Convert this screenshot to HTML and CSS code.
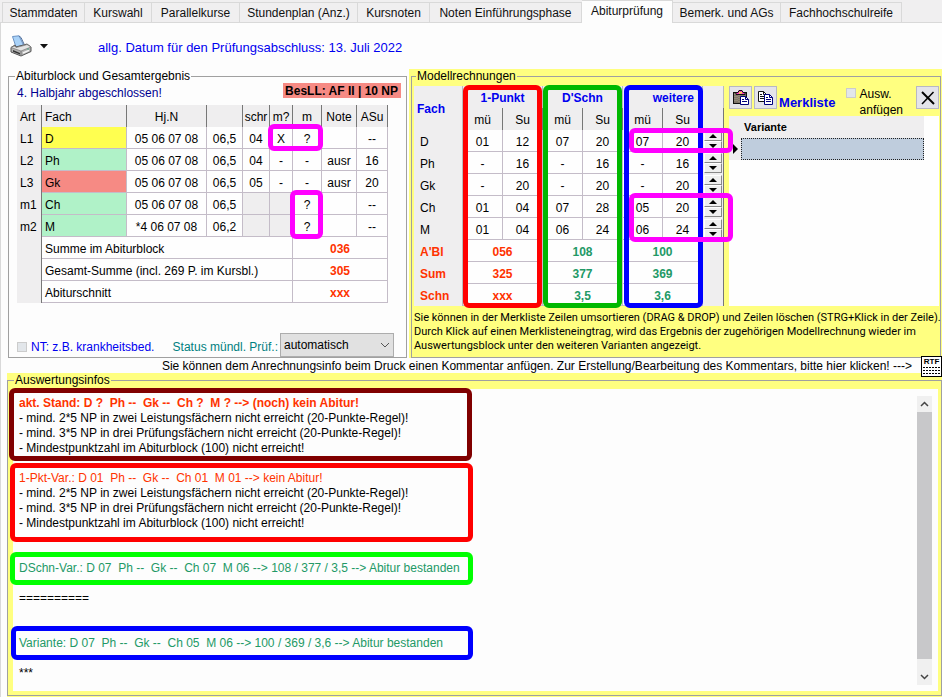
FILE: index.html
```html
<!DOCTYPE html>
<html lang="de">
<head>
<meta charset="utf-8">
<title>Abiturprüfung</title>
<link rel="stylesheet" href="styles.css">
</head>
<body>
<nav class="tabs">
  <a href="#">Stammdaten</a>
  <a href="#">Kurswahl</a>
  <a href="#">Parallelkurse</a>
  <a href="#">Stundenplan (Anz.)</a>
  <a href="#">Kursnoten</a>
  <a href="#">Noten Einführungsphase</a>
  <a href="#" class="active" aria-current="page">Abiturprüfung</a>
  <a href="#">Bemerk. und AGs</a>
  <a href="#">Fachhochschulreife</a>
</nav>
<main class="page">
  <div class="toolbar">
    <button class="print" aria-label="Drucken">
      <svg width="22" height="22" viewBox="0 0 22 22">
        <path d="M2.500 1.500 L9 .8 L13.500 10 L6 12 Z" fill="#a9d2f8" stroke="#6c93c4"/>
        <path d="M9 1 L11 2.500 L14 9" fill="none" stroke="#4f6f9c"/>
        <path d="M1 12.500 L5 10 L6 12 L13.500 10 L17 9 L21 12 L21 16.500 L11 21 L1 17 Z" fill="#b4b4b4" stroke="#555"/>
        <path d="M1 12.500 L11 16 L21 12 L17 9.500 L14 10.500 L6 12.500 L4.500 11 Z" fill="#e4e4e4" stroke="#777" stroke-width=".7"/>
        <path d="M3 15 L10 18 L10 19.500 L3 16.700 Z" fill="#333"/>
        <path d="M11 16 V21" stroke="#777"/>
        <path d="M13 18 L19 15.400" stroke="#f4f4f4" stroke-width="1.500"/>
        <rect x="17" y="13.500" width="2" height="1" fill="#5a8"/>
      </svg>
      <svg width="8" height="5" viewBox="0 0 8 5"><path d="M0 0 H8 L4 4.500 Z" fill="#111"/></svg>
    </button>
    <span class="date">allg. Datum für den Prüfungsabschluss: 13. Juli 2022</span>
  </div>

  <div class="panels">
    <fieldset class="group abitur">
      <legend>Abiturblock und Gesamtergebnis</legend>
      <div class="abi-head">
        <span class="navy">4. Halbjahr abgeschlossen!</span>
        <strong class="badge">BesLL: AF II | 10 NP</strong>
      </div>
      <div class="marked">
        <table class="grid abi-grid">
          <colgroup><col class="w24"><col class="w85"><col class="w80"><col class="w36"><col class="w27"><col class="w23"><col class="w29"><col class="w35"><col class="w32"></colgroup>
          <thead><tr><th class="l">Art</th><th class="l">Fach</th><th>Hj.N</th><th></th><th>schr</th><th>m?</th><th>m</th><th>Note</th><th>ASu</th></tr></thead>
          <tbody>
            <tr><th class="l">L1</th><td class="l yellow">D</td><td>05 06 07 08</td><td>06,5</td><td>04</td><td>X</td><td>?</td><td></td><td>--</td></tr>
            <tr><th class="l">L2</th><td class="l mint">Ph</td><td>05 06 07 08</td><td>06,5</td><td>04</td><td>-</td><td>-</td><td>ausr</td><td>16</td></tr>
            <tr><th class="l">L3</th><td class="l salmon">Gk</td><td>05 06 07 08</td><td>06,5</td><td>05</td><td>-</td><td>-</td><td>ausr</td><td>20</td></tr>
            <tr><th class="l">m1</th><td class="l mint">Ch</td><td>05 06 07 08</td><td>06,5</td><td class="off"></td><td class="off"></td><td>?</td><td></td><td>--</td></tr>
            <tr><th class="l">m2</th><td class="l mint">M</td><td>*4 06 07 08</td><td>06,2</td><td class="off"></td><td class="off"></td><td>?</td><td></td><td>--</td></tr>
            <tr><th></th><td class="l" colspan="5">Summe im Abiturblock</td><td class="bad" colspan="3">036</td></tr>
            <tr><th></th><td class="l" colspan="5">Gesamt-Summe (incl. 269 P. im Kursbl.)</td><td class="bad" colspan="3">305</td></tr>
            <tr><th></th><td class="l" colspan="5">Abiturschnitt</td><td class="bad" colspan="3">xxx</td></tr>
          </tbody>
        </table>
        <i class="mark magenta mark-lk"></i>
        <i class="mark magenta mark-m"></i>
      </div>
      <div class="abi-foot">
        <input type="checkbox" id="nt"><label for="nt" class="blue">NT: z.B. krankheitsbed.</label>
        <label for="status" class="teal">Status mündl. Prüf.:</label>
        <span class="select">
          <select id="status"><option>automatisch</option></select>
          <svg width="10" height="6" viewBox="0 0 10 6"><path d="M1 1 L5 5 L9 1" fill="none" stroke="#555"/></svg>
        </span>
      </div>
    </fieldset>

    <div class="tint model-wrap">
      <fieldset class="group model">
        <legend>Modellrechnungen</legend>
        <div class="model-body">
          <div class="marked">
            <table class="grid model-grid">
              <colgroup><col class="w49"><col class="w40"><col class="w40"><col class="w40"><col class="w40"><col class="w40"><col class="w40"><col class="w21"></colgroup>
              <thead>
                <tr><th class="l blue b" rowspan="2">Fach</th><th class="blue b" colspan="2">1-Punkt</th><th class="blue b" colspan="2">D'Schn</th><th class="blue b r" colspan="2">weitere</th><th></th></tr>
                <tr><th>mü</th><th>Su</th><th>mü</th><th>Su</th><th>mü</th><th>Su</th><th></th></tr>
              </thead>
              <tbody>
                <tr><th class="l">D</th><td>01</td><td>12</td><td>07</td><td>20</td><td>07</td><td>20</td><th class="spin"><button aria-label="D erhöhen"></button><button class="down" aria-label="D verringern"></button></th></tr>
                <tr><th class="l">Ph</th><td>-</td><td>16</td><td>-</td><td>16</td><td>-</td><td>16</td><th class="spin"><button aria-label="Ph erhöhen"></button><button class="down" aria-label="Ph verringern"></button></th></tr>
                <tr><th class="l">Gk</th><td>-</td><td>20</td><td>-</td><td>20</td><td>-</td><td>20</td><th class="spin"><button aria-label="Gk erhöhen"></button><button class="down" aria-label="Gk verringern"></button></th></tr>
                <tr><th class="l">Ch</th><td>01</td><td>04</td><td>07</td><td>28</td><td>05</td><td>20</td><th class="spin"><button aria-label="Ch erhöhen"></button><button class="down" aria-label="Ch verringern"></button></th></tr>
                <tr><th class="l">M</th><td>01</td><td>04</td><td>06</td><td>24</td><td>06</td><td>24</td><th class="spin"><button aria-label="M erhöhen"></button><button class="down" aria-label="M verringern"></button></th></tr>
                <tr><th class="l bad">A'Bl</th><td class="bad" colspan="2">056</td><td class="good" colspan="2">108</td><td class="good" colspan="2">100</td><th></th></tr>
                <tr><th class="l bad">Sum</th><td class="bad" colspan="2">325</td><td class="good" colspan="2">377</td><td class="good" colspan="2">369</td><th></th></tr>
                <tr><th class="l bad">Schn</th><td class="bad" colspan="2">xxx</td><td class="good" colspan="2">3,5</td><td class="good" colspan="2">3,6</td><th></th></tr>
              </tbody>
            </table>
            <i class="mark red mark-col1"></i>
            <i class="mark green mark-col2"></i>
            <i class="mark royal mark-col3"></i>
            <i class="mark magenta mark-d"></i>
            <i class="mark magenta mark-ch"></i>
          </div>
          <section class="merk">
            <div class="merk-bar">
              <button class="tool" aria-label="Einfügen">
                <svg width="18" height="18" viewBox="0 0 18 18">
                  <rect x="1.500" y="3.500" width="13" height="11" fill="#7d7568" stroke="#111"/>
                  <path d="M3 5 V13 M5 5 V13 M7 6 V13" stroke="#a9a08c" stroke-dasharray="1 1"/>
                  <path d="M4 5.500 V3.500 H6 L7 1.500 H10 L11 3.500 H13 V5.500 Z" fill="#ff40c0" stroke="#111"/>
                  <rect x="7" y="3" width="3" height="1.500" fill="#ffec3d"/>
                  <path d="M8.500 7.500 H13.500 L16.500 10.500 V15.500 H8.500 Z" fill="#fff" stroke="#00007c"/>
                  <path d="M13.500 7.500 V10.500 H16.500 M10 10.500 H12 M10 12.500 H15" fill="none" stroke="#00007c"/>
                </svg>
              </button>
              <button class="tool" aria-label="Kopieren">
                <svg width="18" height="18" viewBox="0 0 18 18">
                  <path d="M1.500 2.500 H6.500 L9.500 5.500 V12.500 H1.500 Z" fill="#fff" stroke="#111"/>
                  <path d="M6.500 2.500 V5.500 H9.500 M3 5.500 H5 M3 7.500 H7 M3 9.500 H7" fill="none" stroke="#111"/>
                  <path d="M7.500 5.500 H12.500 L15.500 8.500 V15.500 H7.500 Z" fill="#fff" stroke="#00007c"/>
                  <path d="M12.500 5.500 V8.500 H15.500 M9 8.500 H11 M9 10.500 H14 M9 12.500 H14" fill="none" stroke="#00007c"/>
                </svg>
              </button>
              <strong class="blue merk-title">Merkliste</strong>
              <span class="attach"><input type="checkbox" id="ausw"><label for="ausw">Ausw.<br>anfügen</label></span>
              <button class="tool" aria-label="Löschen">
                <svg width="16" height="16" viewBox="0 0 16 16"><path d="M2 2 L14 14" stroke="#000" stroke-width="2"/><path d="M13.500 2 L2 14" stroke="#000" stroke-width="1.500"/></svg>
              </button>
            </div>
            <div class="merk-list">
              <table>
                <thead><tr><th class="mark-cell"></th><th>Variante</th></tr></thead>
                <tbody><tr><th class="mark-cell"><svg width="6" height="12" viewBox="0 0 6 12"><path d="M0 1 L5 6 L0 11 Z" fill="#000"/></svg></th><td></td></tr></tbody>
              </table>
            </div>
          </section>
        </div>
        <p class="hint">Sie können in der Merkliste Zeilen umsortieren (DRAG &amp; DROP) und Zeilen löschen (STRG+Klick in der Zeile).<br>Durch Klick auf einen Merklisteneingtrag, wird das Ergebnis der zugehörigen Modellrechnung wieder im<br>Auswertungsblock unter den weiteren Varianten angezeigt.</p>
      </fieldset>
    </div>
  </div>

  <div class="comment">
    <span>Sie können dem Anrechnungsinfo beim Druck einen Kommentar anfügen. Zur Erstellung/Bearbeitung des Kommentars, bitte hier klicken! ---&gt;</span>
    <button class="rte" aria-label="Kommentar bearbeiten">
      <b>RTF</b>
      <svg width="17" height="7" viewBox="0 0 17 7"><path d="M0 .5 H17 M0 3.500 H17 M0 6.500 H17" stroke="#000" stroke-dasharray="2 1"/></svg>
    </button>
  </div>

  <div class="tint result-wrap">
    <fieldset class="group result">
      <legend>Auswertungsinfos</legend>
      <div class="memo">
        <div class="lines"><b class="alert">akt. Stand: D ?  Ph --  Gk --  Ch ?  M ? --&gt; (noch) kein Abitur!</b>
- mind. 2*5 NP in zwei Leistungsfächern nicht erreicht (20-Punkte-Regel)!
- mind. 3*5 NP in drei Prüfungsfächern nicht erreicht (20-Punkte-Regel)!
- Mindestpunktzahl im Abiturblock (100) nicht erreicht!

<span class="alert">1-Pkt-Var.: D 01  Ph --  Gk --  Ch 01  M 01 --&gt; kein Abitur!</span>
- mind. 2*5 NP in zwei Leistungsfächern nicht erreicht (20-Punkte-Regel)!
- mind. 3*5 NP in drei Prüfungsfächern nicht erreicht (20-Punkte-Regel)!
- Mindestpunktzahl im Abiturblock (100) nicht erreicht!


<span class="pass">DSchn-Var.: D 07  Ph --  Gk --  Ch 07  M 06 --&gt; 108 / 377 / 3,5 --&gt; Abitur bestanden</span>

==========


<span class="pass">Variante: D 07  Ph --  Gk --  Ch 05  M 06 --&gt; 100 / 369 / 3,6 --&gt; Abitur bestanden</span>

***</div>
        <div class="scroll">
          <button aria-label="Nach oben"><svg width="9" height="6" viewBox="0 0 9 6"><path d="M1 5 L4.500 1.500 L8 5" fill="none" stroke="#444" stroke-width="1.500"/></svg></button>
          <span class="thumb"></span>
          <button aria-label="Nach unten"><svg width="9" height="6" viewBox="0 0 9 6"><path d="M1 1 L4.500 4.500 L8 1" fill="none" stroke="#444" stroke-width="1.500"/></svg></button>
        </div>
        <i class="mark maroon mark-akt"></i>
        <i class="mark red mark-pkt"></i>
        <i class="mark lime mark-dschn"></i>
        <i class="mark royal mark-var"></i>
      </div>
    </fieldset>
  </div>
</main>
</body>
</html>
```
FILE: styles.css
```css
* { box-sizing: border-box; }

body {
  margin: 0;
  min-height: 100vh;
  display: flex;
  flex-direction: column;
  background: #fdfdfd;
  color: #000;
  font: 12px/14px "Liberation Sans", Arial, sans-serif;
}

button, select, input { font: inherit; margin: 0; padding: 0; }
svg { display: block; }

.blue { color: #0000f0; }
.navy { color: #000090; }
.teal { color: #008080; }
.b { font-weight: bold; }

/* Tabs */
.tabs {
  display: grid;
  grid-template-columns: 83px 67px 88px 118px 72px 152px 91px 108px 121px;
  height: 23px;
  padding-left: 2px;
  background: #f0eff0;
  border-bottom: 1px solid #d9d9d9;
  white-space: nowrap;
}
.tabs a {
  margin-top: 2px;
  height: 20px;
  line-height: 21px;
  text-align: center;
  color: #111;
  text-decoration: none;
  border: solid #d9d9d9;
  border-width: 1px 1px 0 0;
}
.tabs a:first-child { border-left-width: 1px; }
.tabs .active {
  margin-top: 0;
  height: 23px;
  background: #fdfdfd;
}

/* Page */
.page {
  flex: 1;
  display: flex;
  flex-direction: column;
  border-left: 1px solid #d9d9d9;
}
.toolbar {
  display: flex;
  align-items: center;
  height: 46px;
  padding: 0 9px;
}
.print {
  display: flex;
  align-items: center;
  gap: 8px;
  width: 88px;
  border: 0;
  background: none;
}
.date { color: #0000f0; font-size: 13px; padding-top: 4px; }

.group {
  min-width: 0;
  margin: 0;
  padding: 0;
  border: 1px solid #a0a0a0;
}
.group legend {
  margin-left: 6px;
  padding: 0 1px;
  height: 14px;
  white-space: nowrap;
}
.group.model legend { margin-left: 4px; }
.group.result legend { margin-left: 1px; }
.tint { background: #ffff80; }

.panels { display: flex; gap: 2px; padding-left: 7px; }
.abitur { flex: 0 0 399px; }
.model-wrap { flex: 1; min-width: 0; padding: 0 1px 0 2px; }
.model { height: 100%; }

.abi-head, .abi-foot, .abitur .marked { margin: 0 8px; }
.abi-head { display: flex; justify-content: space-between; height: 22px; }
.abi-head .navy { padding-top: 3px; }
.badge {
  height: 15px;
  margin-right: -3px;
  padding: 0 3px 0 2px;
  line-height: 16px;
  background: #f68a84;
}

/* Data grids */
.marked { position: relative; }
.grid {
  table-layout: fixed;
  border-collapse: separate;
  border-spacing: 0;
}
.abi-grid { width: 371px; }
.model-grid { width: 310px; }
.w21 { width: 21px; }
.w23 { width: 23px; }
.w24 { width: 25px; }
.w27 { width: 27px; }
.w29 { width: 29px; }
.w32 { width: 31px; }
.w35 { width: 35px; }
.w36 { width: 36px; }
.w40 { width: 40px; }
.w49 { width: 49px; }
.w80 { width: 80px; }
.w85 { width: 85px; }
.grid th, .grid td {
  height: 22px;
  padding: 2px 0 0;
  text-align: center;
  white-space: nowrap;
  overflow: hidden;
  font-weight: normal;
  border: solid #c4bcc8;
  border-width: 0 1px 1px 0;
}
.grid td { background: #fefefe; }
.grid th { background: #efeeef; border-color: #777; border-bottom-width: 0; }
.grid .l { text-align: left; padding-left: 3px; }
.grid .r { text-align: right; padding-right: 8px; }
.grid .off { background: #efeeef; }
.grid .yellow { background: #ffff50; }
.grid .mint { background: #b0f2c8; }
.grid .salmon { background: #f68a84; }
.grid .b { font-weight: bold; }
.grid .bad { color: #ff3300; font-weight: bold; }
.grid .good { color: #229966; font-weight: bold; }
.model-grid thead tr:first-child th { border-right-color: #bbb; }
.model-grid tbody th.l { padding-left: 6px; border-right-color: #bbb; }
.grid .spin { padding: 1px; }
.spin button {
  display: flex;
  align-items: center;
  justify-content: center;
  width: 100%;
  height: 10px;
  border: 1px solid #888;
  border-color: #fff #888 #888 #fff;
  background: #efefef;
}
.spin button::before {
  content: "";
  border: solid transparent;
  border-width: 0 4px 4px;
  border-bottom-color: #000;
}
.spin .down::before {
  border-width: 4px 4px 0;
  border-top-color: #000;
}

.abi-foot {
  display: flex;
  align-items: center;
  margin-top: 30px;
  height: 24px;
  white-space: nowrap;
}
.abi-foot .blue { padding: 4px 0 0 4px; flex: 1; }
.abi-foot .teal { padding: 4px 2px 0 0; }
.abi-foot .select { margin-right: 4px; }
input[type="checkbox"] {
  appearance: none;
  width: 10px;
  height: 10px;
  border: 1px solid #ccc;
  background: #e2e6ea;
}
.abi-foot input { margin-top: 4px; }
.select { position: relative; width: 114px; }
.select select {
  display: block;
  width: 100%;
  height: 24px;
  padding-left: 3px;
  appearance: none;
  border: 1px solid #adadad;
  border-radius: 0;
  background: #e1e1e1;
  color: #000;
}
.select svg { position: absolute; right: 4px; top: 9px; pointer-events: none; }

/* Model calculations */
.model-body { display: flex; gap: 5px; padding: 3px 1px 0 2px; }
.merk { flex: 1; min-width: 0; display: flex; flex-direction: column; }
.merk-bar { display: flex; align-items: flex-start; gap: 2px; height: 30px; }
.tool {
  display: flex;
  align-items: center;
  justify-content: center;
  flex: 0 0 23px;
  height: 23px;
  border: 1px solid #b8b8c4;
  background: #e4e4ea;
}
.merk-title { font-size: 13px; padding-top: 10px; }
.attach {
  display: flex;
  gap: 4px;
  margin-left: auto;
  margin-right: 11px;
  line-height: 16px;
}
.attach input { margin-top: 2px; }
.merk-list { flex: 1; padding-right: 15px; background: #fefefe; }
.merk-list table { width: 100%; border-spacing: 0; table-layout: fixed; }
.merk-list th {
  height: 22px;
  padding: 0 0 0 3px;
  background: #efeeef;
  text-align: left;
  font-size: 11px;
}
.merk-list .mark-cell { width: 12px; padding-left: 4px; }
.merk-list td { padding: 0; background: #bfcddd; border: 1px dotted #222; }
.hint {
  margin: 5px 0 4px 2px;
  font-family: Roboto, "Liberation Sans", sans-serif;
  font-size: 11px;
  white-space: nowrap;
}

/* Comment line */
.comment {
  display: flex;
  justify-content: flex-end;
  height: 15px;
  line-height: 16px;
  white-space: nowrap;
}
.comment span { padding-right: 9px; }
.rte {
  position: relative;
  display: flex;
  flex-direction: column;
  align-items: center;
  gap: 1px;
  flex: 0 0 21px;
  height: 21px;
  margin-top: -2px;
  border: 1px solid #000;
  background: #fff;
}
.rte b { font-size: 8px; line-height: 9px; }

/* Evaluation */
.result-wrap {
  flex: 1;
  display: flex;
  margin-left: 6px;
  padding-bottom: 1px;
}
.result { flex: 1; padding: 2px 3px 4px 5px; }
.memo {
  position: relative;
  display: flex;
  justify-content: space-between;
  height: 100%;
  padding: 7px 6px 6px;
  background: #fdfdfd;
}
.lines { white-space: pre; line-height: 15px; }
.alert { color: #ff3300; }
.pass { color: #229966; }
.scroll {
  display: flex;
  flex-direction: column;
  width: 15px;
  background: #f0f0f0;
}
.scroll button {
  display: flex;
  align-items: center;
  justify-content: center;
  height: 16px;
  border: 0;
  background: #f0f0f0;
}
.scroll .thumb { flex: 1; margin-bottom: 10px; background: #c8c8ca; }

/* Highlight frames drawn over the content */
.mark {
  position: absolute;
  border: 5px solid;
  border-radius: 6px;
  pointer-events: none;
}
.magenta { border-color: #ff00ff; }
.red { border-color: #ff0000; }
.green { border-color: #00b800; }
.lime { border-color: #00ff00; }
.royal { border-color: #0000ff; }
.maroon { border-color: #800000; }
.mark-lk { left: 251px; top: 19px; width: 55px; height: 27px; }
.mark-m { left: 273px; top: 85px; width: 33px; height: 49px; }
.mark-col1 { left: 49px; top: -1px; width: 79px; height: 223px; }
.mark-col2 { left: 129px; top: -1px; width: 79px; height: 223px; }
.mark-col3 { left: 210px; top: -1px; width: 79px; height: 223px; }
.mark-d { left: 215px; top: 42px; width: 104px; height: 25px; }
.mark-ch { left: 215px; top: 107px; width: 104px; height: 49px; }
.mark-akt { left: -4px; top: -1px; width: 463px; height: 73px; }
.mark-pkt { left: -3px; top: 74px; width: 463px; height: 79px; }
.mark-dschn { left: -3px; top: 163px; width: 463px; height: 33px; }
.mark-var { left: -2px; top: 237px; width: 462px; height: 34px; }
```
